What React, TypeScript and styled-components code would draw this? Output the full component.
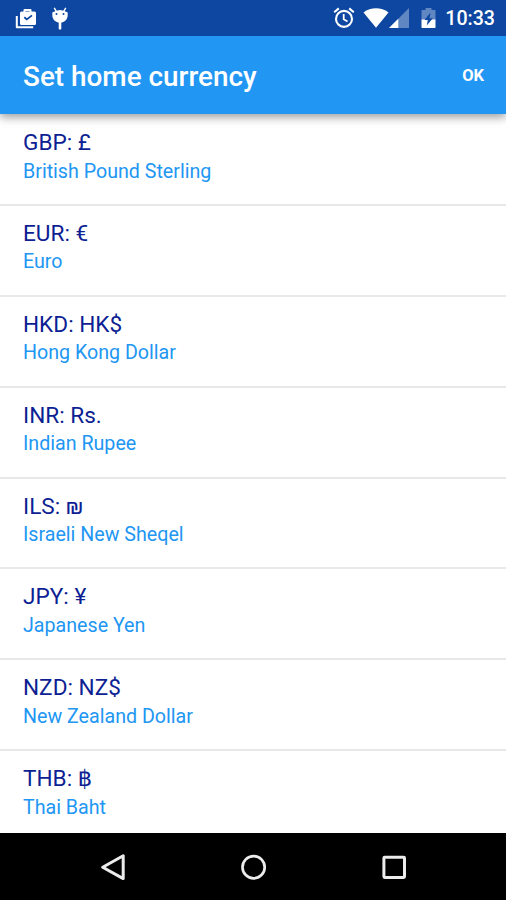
import React, { FunctionComponent } from 'react';
import styled, { createGlobalStyle } from 'styled-components';

const GlobalStyle = createGlobalStyle`
  body {
    margin: 0;
    background: #000000;
    font-family: Roboto, 'DejaVu Sans', sans-serif;
  }
`;

const Screen = styled.div`
  display: flex;
  flex-direction: column;
  height: 900px;
  overflow: hidden;
  background: #FFFFFF;
`;

const StatusBar = styled.div`
  display: flex;
  flex: none;
  justify-content: space-between;
  height: 36px;
  padding: 0 11px 0 15px;
  background: #0D47A1;
  z-index: 2;
`;

const StatusGroup = styled.div<{ $gap?: number }>`
  display: flex;
  align-items: center;
  gap: ${({ $gap = 0 }) => $gap}px;
`;

const Clock = styled.div`
  margin-left: 9px;
  padding-top: 2px;
  font-weight: 500;
  font-size: 19.6px;
  line-height: 24px;
  color: #FFFFFF;
`;

const AppBar = styled.div`
  display: flex;
  flex: none;
  align-items: center;
  justify-content: space-between;
  height: 78px;
  padding: 0 22px 0 23px;
  box-sizing: border-box;
  background: #2196F3;
  box-shadow: 0 3px 9px rgba(0, 0, 0, 0.4);
  z-index: 1;
`;

const Title = styled.div`
  padding-top: 3px;
  font-weight: 500;
  font-size: 27.9px;
  line-height: 32px;
  color: #FFFFFF;
`;

const OkButton = styled.button`
  padding: 2px 0 0;
  border: none;
  background: none;
  font-family: inherit;
  font-weight: 700;
  font-size: 16.5px;
  line-height: 20px;
  color: #FFFFFF;
`;

const CurrencyList = styled.div`
  flex: 1;
  min-height: 0;
  padding-top: 1px;
  overflow: hidden;
`;

const CurrencyItem = styled.div`
  height: 90.9px;
  padding: 14px 23px 0;
  box-sizing: border-box;
  border-bottom: 2px solid #E8E8E8;
`;

const CurrencyCode = styled.div`
  height: 28.5px;
  font-size: 22.6px;
  line-height: 28px;
  color: #0D1F93;
`;

const CurrencyName = styled.div`
  height: 28px;
  font-size: 19.65px;
  line-height: 28px;
  color: #2196F3;
`;

const NavigationBar = styled.div`
  display: flex;
  flex: none;
  align-items: center;
  justify-content: space-between;
  height: 67px;
  padding: 0 98px;
  box-sizing: border-box;
  background: #000000;
`;

const currencies = [
  { code: 'GBP', symbol: '£', name: 'British Pound Sterling' },
  { code: 'EUR', symbol: '€', name: 'Euro' },
  { code: 'HKD', symbol: 'HK$', name: 'Hong Kong Dollar' },
  { code: 'INR', symbol: 'Rs.', name: 'Indian Rupee' },
  { code: 'ILS', symbol: '₪', name: 'Israeli New Sheqel' },
  { code: 'JPY', symbol: '¥', name: 'Japanese Yen' },
  { code: 'NZD', symbol: 'NZ$', name: 'New Zealand Dollar' },
  { code: 'THB', symbol: '฿', name: 'Thai Baht' },
];

const TasksIcon = () => (
  <svg width="22" height="36" viewBox="0 0 22 36" fill="none">
    <path d="M1.8 16v11.2h16.4" stroke="#FFFFFF" strokeWidth="2" strokeLinejoin="round" />
    <path d="M9.5 12V10h6V12" stroke="#FFFFFF" strokeWidth="2" strokeLinejoin="round" />
    <rect x="5" y="11.5" width="16" height="13.5" rx="1.5" fill="#FFFFFF" />
    <path d="M9.3 17.2l2.5 2.2 5.2-4" stroke="#0D47A1" strokeWidth="1.8" />
  </svg>
);

const DroidIcon = () => (
  <svg width="18" height="36" viewBox="0 0 18 36" fill="#FFFFFF">
    <path d="M3.2 7.8l2 3.4M14.8 7.8l-2 3.4" stroke="#FFFFFF" strokeWidth="1.4" />
    <path d="M1.3 12.4Q9 7.4 16.7 12.4V15c0 4.3-3 7.6-7.7 7.6S1.3 19.3 1.3 15z" />
    <rect x="7.7" y="21" width="2.6" height="8.6" rx="1.2" />
    <circle cx="5.5" cy="13.9" r="1" fill="#0D47A1" />
    <circle cx="12.5" cy="13.9" r="1" fill="#0D47A1" />
  </svg>
);

const AlarmIcon = () => (
  <svg width="22" height="36" viewBox="0 0 22 36" fill="none" stroke="#FFFFFF" strokeWidth="2.1">
    <circle cx="11" cy="18.9" r="8" />
    <path d="M1.2 12.2l4.6-3.8M20.8 12.2l-4.6-3.8" />
    <path d="M10.7 14v5.2l3.8 2.3" strokeWidth="1.8" />
  </svg>
);

const WifiIcon = () => (
  <svg width="26" height="36" viewBox="0 0 26 36">
    <path d="M.5 12.4C8 6.9 18 6.9 25.5 12.4L13 27.7z" fill="#FFFFFF" />
  </svg>
);

const SignalIcon = () => (
  <svg width="20" height="36" viewBox="0 0 20 36">
    <path d="M0 28L20 8v20z" fill="#FFFFFF" fillOpacity="0.35" />
    <path d="M0 28L9.3 18.7V28z" fill="#FFFFFF" />
  </svg>
);

const BatteryIcon = () => (
  <svg width="15" height="36" viewBox="0 0 15 36">
    <path d="M1.5 10h3V8h6v2h3c.8 0 1 .6 1 1v9H.5v-9c0-.5.3-1 1-1z" fill="#FFFFFF" fillOpacity="0.35" />
    <path d="M.5 19.5h14V27c0 .6-.4 1-1 1h-12c-.6 0-1-.4-1-1z" fill="#FFFFFF" />
    <path d="M9.5 12.5l-6 7.5h3.3l-1 5.5 6-7.2H8.5z" fill="#0D47A1" />
  </svg>
);

const BackIcon = () => (
  <svg width="30" height="30" viewBox="0 0 30 30" fill="none" stroke="#ECECEC" strokeWidth="3" strokeLinejoin="round">
    <path d="M4.7 15.2L25.2 3.8v22.8z" />
  </svg>
);

const HomeIcon = () => (
  <svg width="30" height="30" viewBox="0 0 30 30" fill="none" stroke="#ECECEC" strokeWidth="2.7">
    <circle cx="15.6" cy="15.2" r="11.1" />
  </svg>
);

const RecentsIcon = () => (
  <svg width="30" height="30" viewBox="0 0 30 30" fill="none" stroke="#ECECEC" strokeWidth="3">
    <rect x="5.9" y="5.2" width="20.6" height="20.2" rx="0.8" />
  </svg>
);

const SetHomeCurrency: FunctionComponent = () => (
  <Screen>
    <GlobalStyle />
    <StatusBar>
      <StatusGroup $gap={14}>
        <TasksIcon />
        <DroidIcon />
      </StatusGroup>
      <StatusGroup>
        <StatusGroup $gap={8}>
          <AlarmIcon />
          <WifiIcon />
        </StatusGroup>
        <StatusGroup $gap={12}>
          <SignalIcon />
          <BatteryIcon />
        </StatusGroup>
        <Clock>10:33</Clock>
      </StatusGroup>
    </StatusBar>
    <AppBar>
      <Title>Set home currency</Title>
      <OkButton>OK</OkButton>
    </AppBar>
    <CurrencyList>
      {currencies.map(({ code, symbol, name }) => (
        <CurrencyItem key={code}>
          <CurrencyCode>{code}: {symbol}</CurrencyCode>
          <CurrencyName>{name}</CurrencyName>
        </CurrencyItem>
      ))}
    </CurrencyList>
    <NavigationBar>
      <BackIcon />
      <HomeIcon />
      <RecentsIcon />
    </NavigationBar>
  </Screen>
);

export default SetHomeCurrency;
